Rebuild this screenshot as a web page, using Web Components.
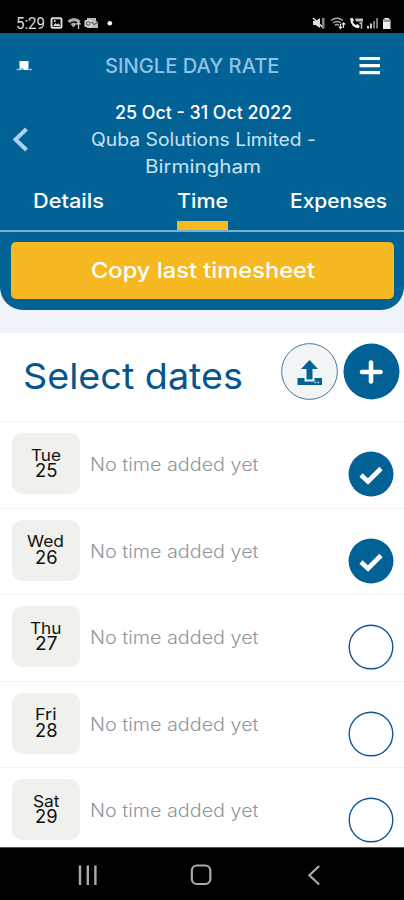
<!DOCTYPE html>
<html lang="en">
<head>
<meta charset="utf-8">
<title>Timesheet</title>
<style>
html,body{margin:0;padding:0;background:#000}
body{font-family:Inter,"Liberation Sans",sans-serif;width:404px;height:900px;overflow:hidden}
</style>
</head>
<body>
<time-app></time-app>
<script>
const define = (name, html, setup) => customElements.define(name, class extends HTMLElement {
  connectedCallback() {
    if (this.shadowRoot) return;
    const t = document.createElement('template');
    t.innerHTML = typeof html === 'function' ? html(this) : html;
    this.attachShadow({mode: 'open'}).append(t.content.cloneNode(true));
    if (setup) setup(this);
  }
});

/* One line of text widened to a given width: w = width, s = font size, h = line height */
define('wide-text', e => `
<style>
:host{display:block;flex:none;text-align:left;width:${e.getAttribute('w')}px;height:${e.getAttribute('h')}px}
span{display:inline-block;white-space:nowrap;font-size:${e.getAttribute('s')}px;line-height:${e.getAttribute('h')}px;transform-origin:0 50%;vertical-align:top}
</style><span>${e.getAttribute('text')}</span>`, e => {
  const s = e.shadowRoot.querySelector('span');
  s.style.transform = `scaleX(${e.getAttribute('w') / s.getBoundingClientRect().width})`;
});

define('status-bar', `
<style>
:host{display:flex;height:33px;background:#000;color:#ddd;box-sizing:border-box;padding:13px 12.5px 0 15.5px;justify-content:space-between;font-family:Roboto,sans-serif;font-weight:400}
div{display:flex;height:20px}
svg{display:block}
</style>
<div><wide-text w="29" s="17" h="20" text="5:29"></wide-text>
<svg width="70" height="20" viewBox="0 0 70 20">
<rect x="6.500" y="5.200" width="10" height="9.600" rx="1" fill="none" stroke="#ddd" stroke-width="1.900"/><path d="M8 13l2.500-3 1.600 1.600 1.400-1.400L15.500 13z" fill="#ddd"/><circle cx="9.800" cy="8" r="1" fill="#ddd"/>
<path d="M22.500 7.500q6.500-5 13 0l-2 2.500q-4.500-3.500-9 0zM25.500 11q3.500-2.500 6 0l-3 3.500z" fill="#aaa"/><path d="M33.500 16V9.500M31.500 11.500l2-2.200 2 2.200" stroke="#ccc" fill="none" stroke-width="1.300"/>
<path d="M42 5h9v3l2 1v6H42z" fill="#bbb"/><rect x="39.500" y="7" width="7.500" height="7" rx="1.500" fill="#ddd"/><circle cx="43.200" cy="10.500" r="1.900" fill="none" stroke="#333"/><path d="M46 9l3.500 2.500L53 9" fill="none" stroke="#333"/>
<circle cx="64.800" cy="10.300" r="2.300" fill="#fff"/></svg></div>
<svg width="80" height="20" viewBox="0 0 80 20">
<path d="M1 8h2.500l4.500-3v10l-4.500-3H1z" fill="#ddd"/><path d="M1 5l10.500 10" stroke="#ddd" stroke-width="1.600"/><path d="M10 5h2.500v10.500h-2.500z" fill="#888"/>
<path d="M19 7.500q6-4.500 12 0M21 10q4-3 8 0M23 12.300q2-1.500 4 0" fill="none" stroke="#aaa" stroke-width="1.500"/><path d="M28.500 15.500V11M26.800 13.700l1.700 1.900 1.700-1.900M31.500 15V10M30 11.500l1.600-1.700 1.600 1.700" fill="none" stroke="#ddd" stroke-width="1.200"/>
<path d="M38 5.500l2.500-.8 1.500 2.800-1.300 1.200q1.300 2.600 3.300 3.400l1.500-1 2.300 1.800-1 2.300q-7.500.3-8.800-9.700z" fill="#eee"/><path d="M43 5.500h8v3h-7z" fill="#bbb"/><path d="M47.500 10.500l2-.8v6" fill="none" stroke="#bbb" stroke-width="1.500"/>
<path d="M55 13h2v2.500h-2z" fill="#ddd"/><path d="M58 10.500h2v5h-2z" fill="#ccc"/><path d="M61 8h2v7.500h-2zM64 5h2v10.500h-2z" fill="#777"/>
<path d="M72.500 5h4.500v1.500h1.500v9.500h-7.500V6.500h1.500z" fill="#eee"/><path d="M71.500 6.500h6.500v2.500h-6.500z" fill="#999"/>
</svg>`);

define('tab-item', e => `
<style>
:host{display:flex;flex-direction:column;align-items:center;height:44px;color:#fff;font-weight:500}
i{display:block;align-self:stretch;height:9px;margin-top:7px;background:${e.hasAttribute('active') ? '#f6b922' : 'transparent'}}
</style><wide-text w="${e.getAttribute('w')}" s="20.3" h="27" text="${e.getAttribute('label')}"></wide-text><i></i>`);

define('app-header', `
<style>
:host{display:block;height:277px;box-sizing:border-box;background:#026296;border-radius:0 0 23px 23px;color:#fff}
.top{display:grid;grid-template-columns:104.500px 1fr 46px;align-items:center;height:66px}
.top wide-text{color:#8fc3e3;font-weight:500}
.top svg:first-child{margin-left:15px}
.job{display:grid;grid-template-columns:50px 306px 48px;height:81px;align-items:center;color:#c9e1f1}
.lines{display:flex;flex-direction:column;align-items:center;margin-top:-1px}
.lines :first-child{color:#fff;font-weight:500}
nav{display:grid;grid-template-columns:71px 73px 51px 61.500px 97px;padding:7px 0 0 33px;height:51.500px;box-sizing:border-box;border-bottom:2.500px solid #80adcb}
nav tab-item:nth-child(2){grid-column:3}
nav tab-item:nth-child(3){grid-column:5}
button{display:flex;justify-content:center;align-items:center;margin:10.500px 10px 0 11px;width:383px;height:57px;border:0;border-radius:5px;background:#f6b922;color:#fff;font-family:inherit;font-weight:500;padding:0 0 2px}
svg{display:block}
</style>
<div class="top">
<svg width="18" height="14" viewBox="0 0 18 14"><path d="M4.500 2h9v9h-9z" fill="#fff"/><path d="M1.500 10.500h4M12.500 10.500H17" stroke="#8dbddb" stroke-width="1.300"/><path d="M6.500 8l2.500 3h-2.500z" fill="#5b94bc"/></svg>
<wide-text w="174.500" s="19.500" h="28" text="SINGLE DAY RATE"></wide-text>
<svg width="22" height="20" viewBox="0 0 22 20"><path d="M1.500 2.500h21M1.500 9.600h21M1.500 16.700h21" stroke="#fff" stroke-width="3.200"/></svg>
</div>
<div class="job">
<svg width="32" height="28" viewBox="0 0 32 28"><path d="M26.500 3L15.500 13.500l11 10.500" fill="none" stroke="#a9d3ef" stroke-width="4"/></svg>
<div class="lines"><wide-text w="177" s="18" h="27" text="25 Oct - 31 Oct 2022"></wide-text><wide-text w="225" s="18" h="27" text="Quba Solutions Limited -"></wide-text><wide-text w="116" s="18" h="27" text="Birmingham"></wide-text></div>
</div>
<nav><tab-item w="71" label="Details"></tab-item><tab-item w="51" label="Time" active></tab-item><tab-item w="97" label="Expenses"></tab-item></nav>
<button><wide-text w="224" s="21.500" h="30" text="Copy last timesheet"></wide-text></button>`);

define('date-title', `
<style>
:host{display:flex;height:89px;box-sizing:border-box;background:#fff;padding:10px 4.500px 0 22.500px;justify-content:space-between;color:#07558e;border-bottom:1px solid #f5f5f7}
wide-text{margin-top:8.500px}
div{display:flex;gap:5px}
svg{display:block}
</style>
<wide-text w="220" s="36" h="48" text="Select dates"></wide-text>
<div><svg width="57" height="57" viewBox="0 0 57 57"><circle cx="28.500" cy="28.500" r="27.900" fill="#f2f4f5" stroke="#3f7d9f" stroke-width="1"/><path d="M28.500 17l8.500 9h-5.500v10.500h-6V26H20z" fill="#026296"/><path d="M16.500 35h7v3.500h10V35h7.500v7h-24.500z" fill="#026296"/><path d="M33.500 39.500h1.600M36.500 39.500h1.600" stroke="#cfe0ea" stroke-width="1.300"/></svg>
<svg width="57" height="57" viewBox="0 0 57 57"><circle cx="28.500" cy="28.500" r="28" fill="#026296"/><path d="M28 19.500v19M19 29h18.500" stroke="#fff" stroke-width="4.600" stroke-linecap="round"/></svg></div>`);

define('day-row', e => `
<style>
:host{display:flex;height:86.500px;box-sizing:border-box;padding:11px 10px 0 12px;border-bottom:1px solid #f5f5f7;background:#fff;flex:none}
.day{display:flex;flex-direction:column;align-items:center;width:67.500px;height:61px;box-sizing:border-box;padding-top:13.500px;border-radius:10px;background:#f0f1ed;color:#111}
.note{margin:18px auto 0 10px;color:#91959d;font-weight:300}
svg{display:block;margin-top:18px}
</style>
<div class="day"><wide-text w="${e.getAttribute('w')}" s="16.500" h="16.500" text="${e.getAttribute('day')}"></wide-text><wide-text w="22.500" s="18" h="16.500" text="${e.getAttribute('date')}"></wide-text></div>
<wide-text class="note" w="168.500" s="18" h="27" text="No time added yet"></wide-text>
<svg width="46" height="46" viewBox="0 0 46 46">${e.hasAttribute('checked')
  ? '<circle cx="23" cy="23" r="22.500" fill="#026296"/><path d="M13 24l7 6.500L33 17.500" fill="none" stroke="#fff" stroke-width="4.600"/>'
  : '<circle cx="23" cy="23" r="21.800" fill="#fff" stroke="#145591" stroke-width="1.400"/>'}</svg>`);

define('nav-bar', `
<style>
:host{display:grid;grid-template-columns:repeat(3,1fr);height:53px;background:#000;box-sizing:border-box;border-top:1px solid #555}
svg{display:block;width:100%;height:53px}
</style>
<svg viewBox="0 0 134.670 53"><path d="M80 17.500v19.500M87.800 17.500v19.500M95.400 17.500v19.500" stroke="#aaa" stroke-width="2.400"/></svg>
<svg viewBox="134.670 0 134.670 53"><rect x="191.500" y="17.500" width="18.500" height="18.500" rx="5" fill="none" stroke="#aaa" stroke-width="2.200"/></svg>
<svg viewBox="269.330 0 134.670 53"><path d="M319.500 18l-9.800 9.200 9.800 9.300" fill="none" stroke="#aaa" stroke-width="2.200"/></svg>`);

define('time-app', `
<style>
:host{display:flex;flex-direction:column;width:404px;height:900px;overflow:hidden;background:#000}
status-bar,nav-bar{flex:none}
main{height:814px;flex:none;overflow:hidden;background:#eff2f8}
.list{margin-top:23px;background:#fff}
</style>
<status-bar></status-bar>
<main><app-header></app-header>
<div class="list"><date-title></date-title>
<day-row day="Tue" date="25" w="30" checked></day-row>
<day-row day="Wed" date="26" w="37" checked></day-row>
<day-row day="Thu" date="27" w="31.500"></day-row>
<day-row day="Fri" date="28" w="21.500"></day-row>
<day-row day="Sat" date="29" w="26.500"></day-row></div></main>
<nav-bar></nav-bar>`);
</script>
</body>
</html>
